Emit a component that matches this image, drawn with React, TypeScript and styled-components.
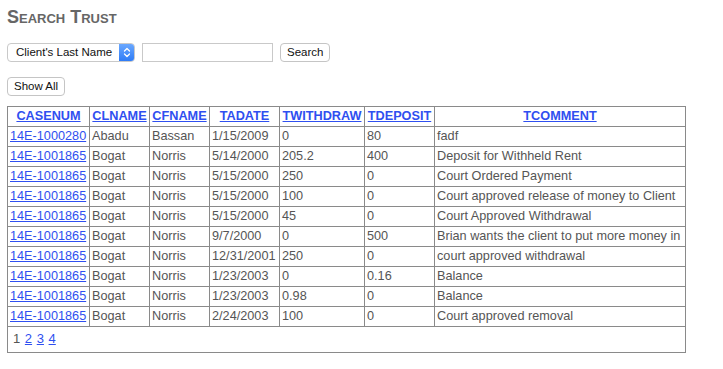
import React from 'react';
import styled, { createGlobalStyle } from 'styled-components';

const GlobalStyle = createGlobalStyle`
    body {
        margin: 0;
        background: #fff;
        font-family: "Liberation Sans", Arial, Helvetica, sans-serif;
    }
`;

const Page = styled.div`
    padding: 7px 7px 0 7px;
    color: #555;
    font-size: 12.7px;
`;

const Title = styled.h1`
    margin: 0;
    font-size: 18px;
    line-height: 21px;
    font-weight: bold;
    font-variant: small-caps;
    color: #666;
`;

const SearchRow = styled.div`
    display: flex;
    align-items: center;
    gap: 7px;
    margin-top: 15px;
    height: 19px;
`;

const SelectBox = styled.div`
    display: inline-flex;
    align-items: stretch;
    width: 128px;
    height: 19px;
    box-sizing: border-box;
    border: 1px solid #c9c9c9;
    border-radius: 4px;
    background: #fff;
    overflow: hidden;
    font-size: 11.5px;
    color: #111;
`;

const SelectLabel = styled.span`
    flex: 1;
    padding-left: 8px;
    line-height: 17px;
    white-space: nowrap;
`;

const Stepper = styled.span`
    width: 15px;
    display: flex;
    align-items: center;
    justify-content: center;
    background: linear-gradient(#6aa8ff, #2f7cf6);
`;

const TextBox = styled.input`
    width: 131px;
    height: 19px;
    box-sizing: border-box;
    border: 1px solid #c9c9c9;
    margin: 0;
    padding: 0 3px;
    font-size: 12px;
    outline: none;
`;

const Button = styled.button`
    height: 19px;
    box-sizing: border-box;
    border: 1px solid #c5c5c5;
    border-radius: 4px;
    background: #fff;
    padding: 0 6px;
    margin: 0;
    font-family: "Liberation Sans", Arial, sans-serif;
    font-size: 11.5px;
    color: #111;
    line-height: 17px;
`;

const ShowAllRow = styled.div`
    margin-top: 15px;
    height: 19px;
`;

const Grid = styled.table`
    margin-top: 10px;
    border-collapse: collapse;
    table-layout: fixed;
    width: 679px;
    border: 1px solid #8a8a8a;
    font-size: 12.7px;
`;

// column width is the border-to-border span; padding and the rule are taken off
const HeadCell = styled.th<{ $w: number }>`
    width: ${p => p.$w - 5}px;
    border: 1px solid #8a8a8a;
    padding: 2px 2px;
    height: 15px;
    line-height: 15px;
    font-weight: bold;
    text-align: center;
    white-space: nowrap;
    overflow: hidden;
`;

const Cell = styled.td`
    border: 1px solid #8a8a8a;
    padding: 2px 2px;
    height: 15px;
    line-height: 15px;
    white-space: nowrap;
    overflow: hidden;
    color: #555;
`;

const Link = styled.a`
    color: #2f4ff0;
    text-decoration: underline;
    cursor: pointer;
`;

const PagerCell = styled.td`
    border: 1px solid #8a8a8a;
    padding: 4px 5px 6px;
    line-height: 15px;
    font-size: 13px;
`;

const PageNum = styled.span`
    margin-right: 1px;
`;

const columns: [string, number][] = [
    ['CASENUM', 82],
    ['CLNAME', 60],
    ['CFNAME', 60],
    ['TADATE', 70],
    ['TWITHDRAW', 85],
    ['TDEPOSIT', 70],
    ['TCOMMENT', 251],
];

const rows = [
    ['14E-1000280', 'Abadu', 'Bassan', '1/15/2009', '0', '80', 'fadf'],
    ['14E-1001865', 'Bogat', 'Norris', '5/14/2000', '205.2', '400', 'Deposit for Withheld Rent'],
    ['14E-1001865', 'Bogat', 'Norris', '5/15/2000', '250', '0', 'Court Ordered Payment'],
    ['14E-1001865', 'Bogat', 'Norris', '5/15/2000', '100', '0', 'Court approved release of money to Client'],
    ['14E-1001865', 'Bogat', 'Norris', '5/15/2000', '45', '0', 'Court Approved Withdrawal'],
    ['14E-1001865', 'Bogat', 'Norris', '9/7/2000', '0', '500', 'Brian wants the client to put more money in'],
    ['14E-1001865', 'Bogat', 'Norris', '12/31/2001', '250', '0', 'court approved withdrawal'],
    ['14E-1001865', 'Bogat', 'Norris', '1/23/2003', '0', '0.16', 'Balance'],
    ['14E-1001865', 'Bogat', 'Norris', '1/23/2003', '0.98', '0', 'Balance'],
    ['14E-1001865', 'Bogat', 'Norris', '2/24/2003', '100', '0', 'Court approved removal'],
];

const Chevrons = () => (
    <svg width="8" height="11" viewBox="0 0 8 11">
        <path d="M1.5 4 L4 1.5 L6.5 4 M1.5 7 L4 9.5 L6.5 7" fill="none" stroke="#fff" strokeWidth="1.3" strokeLinecap="round" strokeLinejoin="round" />
    </svg>
);

const App: React.FC = () => (
    <Page>
        <GlobalStyle />
        <Title>Search Trust</Title>

        <SearchRow>
            <SelectBox>
                <SelectLabel>Client's Last Name</SelectLabel>
                <Stepper><Chevrons /></Stepper>
            </SelectBox>
            <TextBox type="text" />
            <Button>Search</Button>
        </SearchRow>

        <ShowAllRow>
            <Button>Show All</Button>
        </ShowAllRow>

        <Grid>
            <thead>
                <tr>
                    {columns.map(([name, w]) => (
                        <HeadCell key={name} $w={w}><Link>{name}</Link></HeadCell>
                    ))}
                </tr>
            </thead>
            <tbody>
                {rows.map((r, i) => (
                    <tr key={i}>
                        <Cell><Link>{r[0]}</Link></Cell>
                        {r.slice(1).map((v, j) => <Cell key={j}>{v}</Cell>)}
                    </tr>
                ))}
                <tr>
                    <PagerCell colSpan={7}>
                        <PageNum>1</PageNum>{' '}
                        <PageNum><Link>2</Link></PageNum>{' '}
                        <PageNum><Link>3</Link></PageNum>{' '}
                        <PageNum><Link>4</Link></PageNum>
                    </PagerCell>
                </tr>
            </tbody>
        </Grid>
    </Page>
);

export default App;
